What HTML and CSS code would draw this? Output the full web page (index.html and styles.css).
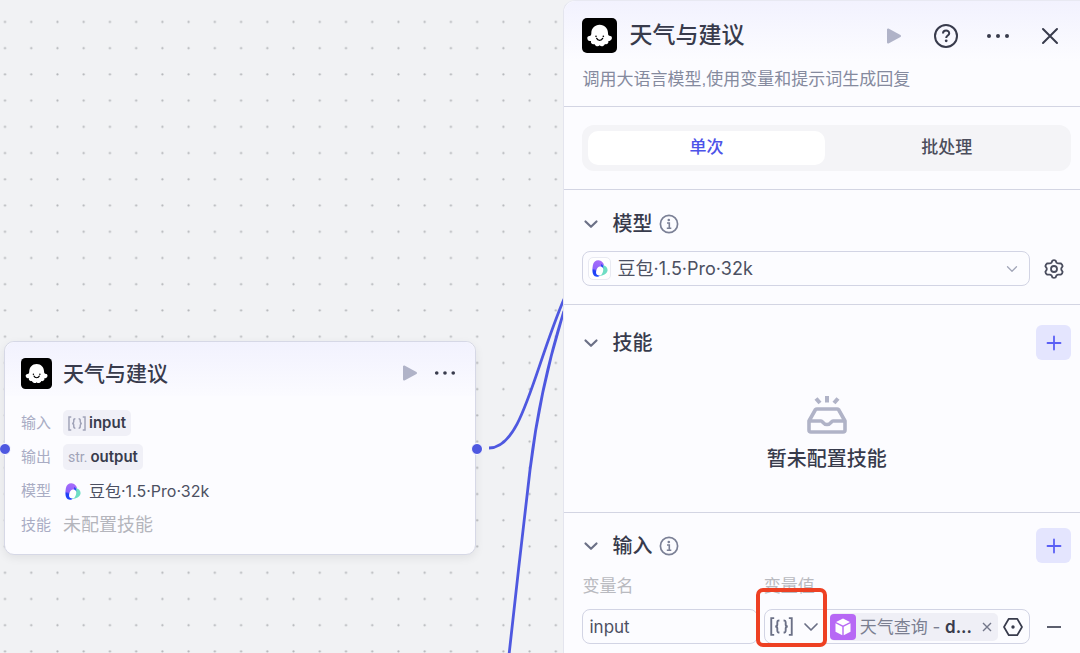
FILE: index.html
```html
<!DOCTYPE html>
<html lang="zh-CN">
<head>
<meta charset="utf-8">
<meta name="viewport" content="width=device-width, initial-scale=1">
<title>天气与建议</title>
<link rel="stylesheet" href="styles.css">
</head>
<body>
<svg class="defs" width="0" height="0" aria-hidden="true">
  <defs>
    <linearGradient id="violet" x1="0.200" y1="0" x2="0" y2="1">
      <stop offset="0" stop-color="#a56bfa"/>
      <stop offset="0.5" stop-color="#8f63fb"/>
      <stop offset="0.62" stop-color="#1f3df5"/>
      <stop offset="1" stop-color="#1f4bff"/>
    </linearGradient>
    <symbol id="ghost" viewBox="0 0 105 105">
      <rect width="105" height="105" rx="15" fill="#000"/>
      <path fill="#fff" d="M53 20C68 20 78 31 78 45C78 52 80 54 85 54C91 54 91 63 87 66C84 69 81 69 79 69C81 76 75 80 69 78C65 86 57 87 53 82C49 87 41 86 37 78C31 80 25 76 27 69C22 69 17 68 16 62C15 57 18 54 22 54C27 54 28 50 28 45C28 31 38 20 53 20Z"/>
      <path d="M44 61C47 69 59 69 62 61" fill="none" stroke="#000" stroke-width="4" stroke-linecap="round"/>
      <circle cx="42" cy="55" r="2.500"/><circle cx="64" cy="55" r="2.500"/>
    </symbol>
    <symbol id="doubao" viewBox="0 0 44 48">
      <path fill="url(#violet)" d="M2 14C4 2 16-2 25 3C33 8 35 16 33 26L22 43C18 49 7 49 3 41C0 35 0 24 2 14Z"/>
      <path fill="#2447f5" d="M25 11C31 14 34 19 34 26L25 20Z"/>
      <path fill="#6fdec4" d="M30 14C39 16 45 23 43 31C41 39 31 44 20 45C27 38 34 27 30 14Z"/>
      <ellipse cx="21" cy="31" rx="9.500" ry="13" fill="#fff" transform="rotate(18 21 31)"/>
    </symbol>
    <symbol id="play" viewBox="0 0 16 18">
      <path d="M2 2.500V15.500L14 9Z" fill="#b0b3c8" stroke="#b0b3c8" stroke-width="2" stroke-linejoin="round"/>
    </symbol>
    <symbol id="dots" viewBox="0 0 24 24">
      <g fill="#383b4c"><circle cx="3" cy="12" r="2"/><circle cx="12" cy="12" r="2"/><circle cx="21" cy="12" r="2"/></g>
    </symbol>
    <symbol id="chevron" viewBox="0 0 16 16">
      <path d="M2.500 5.500L8 10.800L13.500 5.500" fill="none" stroke="currentColor" stroke-width="2.200" stroke-linecap="round" stroke-linejoin="round"/>
    </symbol>
    <symbol id="chevron-thin" viewBox="0 0 16 16">
      <path d="M2 5L8 11L14 5" fill="none" stroke="currentColor" stroke-width="1.700" stroke-linecap="round" stroke-linejoin="round"/>
    </symbol>
    <symbol id="info" viewBox="0 0 20 20">
      <circle cx="10" cy="10" r="8.600" fill="none" stroke="#7b8096" stroke-width="1.700"/>
      <circle cx="9.800" cy="6" r="1.300" fill="#7b8096"/>
      <path d="M8 9H10.300V14M7.800 14.200H12.300" fill="none" stroke="#7b8096" stroke-width="1.600"/>
    </symbol>
    <symbol id="plus" viewBox="0 0 16 16">
      <path d="M8 1.500V14.500M1.500 8H14.500" fill="none" stroke="#5a5ff5" stroke-width="1.800" stroke-linecap="round"/>
    </symbol>
    <symbol id="array" viewBox="0 0 22 18">
      <path d="M4 1H1.200V17H4M18 1H20.800V17H18M9 3.200C7 3.200 7 4 7 5.500V7C7 8.500 6.500 9 5 9C6.500 9 7 9.500 7 11V12.500C7 14 7 14.800 9 14.800M13 3.200C15 3.200 15 4 15 5.500V7C15 8.500 15.500 9 17 9C15.500 9 15 9.500 15 11V12.500C15 14 15 14.800 13 14.800" fill="none" stroke="currentColor" stroke-width="1.800"/>
    </symbol>
  </defs>
</svg>

<div class="app">
  <main class="canvas">
    <svg class="backdrop" width="100%" height="100%" aria-hidden="true">
      <defs>
        <pattern id="grid" x="-8.100" y="8.900" width="26.230" height="26.230" patternUnits="userSpaceOnUse">
          <circle cx="13.100" cy="13.100" r="1.100" fill="#b3b5b8"/>
        </pattern>
      </defs>
      <rect width="100%" height="100%" fill="url(#grid)"/>
      <g fill="none" stroke="#4e58e0" stroke-width="2.800">
        <path d="M489 448C522 448 533 372 564 299"/>
        <path d="M509 655C515 602 524 518 530 470C537 412 548 362 564 311"/>
      </g>
    </svg>

    <article class="node">
      <header class="node-head">
        <svg class="node-logo" aria-hidden="true"><use href="#ghost"/></svg>
        <h2 class="node-title">天气与建议</h2>
        <button class="icon-btn node-btn" aria-label="运行"><svg class="i-play"><use href="#play"/></svg></button>
        <button class="icon-btn node-btn" aria-label="更多"><svg class="i-dots-sm"><use href="#dots"/></svg></button>
      </header>
      <dl class="node-rows">
        <dt>输入</dt>
        <dd><span class="tag"><svg class="i-array-sm"><use href="#array"/></svg>input</span></dd>
        <dt>输出</dt>
        <dd><span class="tag"><span class="tag-type">str.</span>output</span></dd>
        <dt>模型</dt>
        <dd class="node-model"><svg class="i-doubao"><use href="#doubao"/></svg>豆包·1.5·Pro·32k</dd>
        <dt>技能</dt>
        <dd class="muted">未配置技能</dd>
      </dl>
      <span class="port port-in"></span>
      <span class="port port-out"></span>
    </article>
  </main>

  <aside class="panel">
    <header class="panel-head">
      <div class="panel-bar">
        <svg class="panel-logo" aria-hidden="true"><use href="#ghost"/></svg>
        <h1 class="panel-title">天气与建议</h1>
        <div class="panel-actions">
          <button class="icon-btn" aria-label="运行"><svg class="i-play"><use href="#play"/></svg></button>
          <button class="icon-btn" aria-label="帮助">
            <svg class="i-24" viewBox="0 0 24 24"><circle cx="12" cy="12" r="11" fill="none" stroke="#383b4c" stroke-width="2"/><path d="M9 9.600C9 5.600 15.200 5.700 15.200 9.400C15.200 11.600 12.200 11.500 12.200 14" fill="none" stroke="#383b4c" stroke-width="2"/><circle cx="12.200" cy="16.800" r="1.400" fill="#383b4c"/></svg>
          </button>
          <button class="icon-btn" aria-label="更多"><svg class="i-24"><use href="#dots"/></svg></button>
          <button class="icon-btn" aria-label="关闭">
            <svg class="i-24" viewBox="0 0 24 24"><path d="M5 5L19 19M19 5L5 19" stroke="#383b4c" stroke-width="2" stroke-linecap="round"/></svg>
          </button>
        </div>
      </div>
      <p class="panel-desc">调用大语言模型,使用变量和提示词生成回复</p>
    </header>

    <section class="block block-tabs">
      <div class="tabs" role="tablist">
        <button class="tab tab-active" role="tab" aria-selected="true">单次</button>
        <button class="tab" role="tab" aria-selected="false">批处理</button>
      </div>
    </section>

    <section class="block">
      <div class="block-head">
        <button class="fold" aria-label="收起模型"><svg class="i-16"><use href="#chevron"/></svg></button>
        <h2 class="block-title">模型</h2>
        <svg class="i-20" aria-hidden="true"><use href="#info"/></svg>
      </div>
      <div class="field-row">
        <div class="box model-box">
          <span class="model-logo"><svg class="i-doubao"><use href="#doubao"/></svg></span>
          <select class="model-select" aria-label="模型"><option>豆包·1.5·Pro·32k</option></select>
          <svg class="i-caret" aria-hidden="true"><use href="#chevron-thin"/></svg>
        </div>
        <button class="icon-btn side-btn" aria-label="模型设置">
          <svg class="i-20" viewBox="0 0 20 20" fill="none" stroke="#4a4d5e" stroke-width="1.800" stroke-linejoin="round"><path d="M8.500 1.500Q10 .8 11.500 1.500L12.500 3.600Q13.500 4.600 14.800 4.300L17 4.500Q18.400 5.500 18.600 7.200L17.300 9.200V10.800L18.600 12.800Q18.400 14.500 17 15.500L14.800 15.700Q13.500 15.400 12.500 16.400L11.500 18.500Q10 19.200 8.500 18.500L7.500 16.400Q6.500 15.400 5.200 15.700L3 15.500Q1.600 14.500 1.400 12.800L2.700 10.800V9.200L1.400 7.200Q1.600 5.500 3 4.500L5.200 4.300Q6.500 4.600 7.500 3.600Z"/><circle cx="10" cy="10" r="3"/></svg>
        </button>
      </div>
    </section>

    <section class="block block-skills">
      <div class="block-head">
        <button class="fold" aria-label="收起技能"><svg class="i-16"><use href="#chevron"/></svg></button>
        <h2 class="block-title">技能</h2>
        <button class="add" aria-label="添加技能"><svg class="i-16"><use href="#plus"/></svg></button>
      </div>
      <div class="empty">
        <svg class="i-empty" viewBox="0 0 40 38" fill="none" stroke="#b0b3c7" aria-hidden="true">
          <path d="M20 0V6.500M9 2.500L13 7M31 2.500L27 7" stroke-width="4"/>
          <path d="M2 25L8.500 13.500Q9 13 10 13H30Q31 13 31.500 13.500L38 25V34Q38 36 36 36H4Q2 36 2 34ZM2 25H14C16 25 16 28.500 20 28.500C24 28.500 24 25 26 25H38" stroke-width="3.600" stroke-linejoin="round"/>
        </svg>
        <p class="empty-text">暂未配置技能</p>
      </div>
    </section>

    <section class="block block-input">
      <div class="block-head">
        <button class="fold" aria-label="收起输入"><svg class="i-16"><use href="#chevron"/></svg></button>
        <h2 class="block-title">输入</h2>
        <svg class="i-20" aria-hidden="true"><use href="#info"/></svg>
        <button class="add" aria-label="添加输入"><svg class="i-16"><use href="#plus"/></svg></button>
      </div>
      <div class="vars">
        <label class="var-label" for="var-name">变量名</label>
        <span class="var-label">变量值</span>
        <input class="box var-name" id="var-name" type="text" value="input">
        <div class="box var-value">
          <button class="type-btn" aria-label="变量类型">
            <svg class="i-array"><use href="#array"/></svg>
            <svg class="i-16"><use href="#chevron-thin"/></svg>
          </button>
          <span class="ref">
            <svg class="i-cube" viewBox="0 0 26 26" aria-hidden="true"><rect width="26" height="26" rx="4" fill="#b768f5"/><path d="M13 4.500L20 8L13 11.500L6 8ZM5.500 9.300L12.300 12.700V21.200L5.500 17.700ZM20.500 9.300L13.700 12.700V21.200L20.500 17.700Z" fill="#fff"/></svg>
            <span class="ref-text">天气查询 - <b>d...</b></span>
            <button class="ref-clear" aria-label="清除"><svg class="i-x" viewBox="0 0 10 10"><path d="M1 1L9 9M9 1L1 9" stroke="#73778a" stroke-width="1.400"/></svg></button>
          </span>
          <button class="icon-btn hex" aria-label="选择变量"><svg class="i-20" viewBox="0 0 20 20"><path d="M5.800 1.800H14.200L19 10L14.200 18.200H5.800L1 10Z" fill="none" stroke="#383b4c" stroke-width="1.700" stroke-linejoin="round"/><circle cx="10" cy="10" r="1.700" fill="#383b4c"/></svg></button>
          <span class="callout"></span>
        </div>
        <button class="icon-btn side-btn" aria-label="删除"><svg class="i-16" viewBox="0 0 16 16"><path d="M1 8H15" stroke="#4a4d5e" stroke-width="1.800"/></svg></button>
      </div>
    </section>
  </aside>
</div>
</body>
</html>
```
FILE: styles.css
```css
* { box-sizing: border-box; }

body {
  margin: 0;
  background: #f1f2f4;
  color: #383b4c;
  font-family: "Liberation Sans", "Noto Sans CJK SC", sans-serif;
  font-size: 17px;
  line-height: 24px;
}

h1, h2, p, dl, dd { margin: 0; }
svg { display: block; flex: none; }
button, input, select { font: inherit; color: inherit; }
button { margin: 0; padding: 0; border: 0; background: none; cursor: pointer; }

.defs { position: absolute; }

.app {
  display: grid;
  grid-template-columns: minmax(0, 12fr) minmax(0, 11fr);
  height: 100vh;
  overflow: hidden;
}

/* canvas */
.canvas { position: relative; }
.backdrop { position: absolute; inset: 0; }

.node {
  position: absolute;
  left: 4px;
  top: 341px;
  width: 472px;
  border: 1px solid #d6d8e6;
  border-radius: 10px;
  background: #fcfcff;
  box-shadow: 0 3px 10px rgba(0, 0, 0, 0.07);
}
.node-head {
  display: flex;
  align-items: center;
  gap: 11px;
  height: 54px;
  padding: 8px 14px 0 16px;
  border-radius: 10px 10px 0 0;
  background: linear-gradient(#f2f2fe, #fbfbff);
}
.node-logo { width: 31px; height: 31px; }
.node-title { margin-right: auto; font-size: 21px; line-height: 31px; font-weight: 500; }
.node-btn { width: 34px; }
.node-head .node-btn + .node-btn { margin-left: -8px; }
.node-rows {
  display: grid;
  grid-template-columns: 31px 1fr;
  grid-auto-rows: 26px;
  align-items: center;
  gap: 8px 11px;
  padding: 14px 16px 16px;
}
.node-rows dt { font-size: 15px; color: #a9acc4; white-space: nowrap; }
.node-rows .muted { font-size: 18px; color: #b4b5bc; }
.node-model {
  display: flex;
  align-items: center;
  gap: 8px;
  padding-left: 2px;
  color: #4c5062;
  font-family: Inter, "Noto Sans CJK SC", sans-serif;
  font-size: 16px;
}
.tag {
  display: inline-flex;
  align-items: center;
  gap: 3px;
  height: 26px;
  padding: 0 5px;
  border-radius: 5px;
  background: #f0f0f7;
  font-family: Inter, "Noto Sans CJK SC", sans-serif;
  font-size: 15px;
  font-weight: 600;
  vertical-align: top;
}
.tag-type { font-family: Roboto, sans-serif; font-weight: 400; font-size: 14px; color: #a0a3b8; }
.tag svg { color: #a0a3b8; }

.port {
  position: absolute;
  top: 101px;
  width: 12px;
  height: 12px;
  border: 1px solid #fff;
  border-radius: 50%;
  background: #4e58e0;
}
.port-in { left: -6px; }
.port-out { right: -8px; }

/* panel */
.panel {
  position: relative;
  border-left: 1px solid #e4e5ee;
  border-top: 1px solid #e8e9f2;
  border-radius: 12px 0 0 0;
  background: #fcfcff;
}
.panel-head {
  padding: 17px 14px 14px 18px;
  border-radius: 12px 0 0 0;
  background: linear-gradient(#f2f2fe, #fcfcff 60px);
}
.panel-bar { display: flex; align-items: center; gap: 12px; }
.panel-logo { width: 35px; height: 35px; }
.panel-title { margin-right: auto; font-size: 23px; line-height: 35px; font-weight: 500; }
.panel-actions { display: flex; gap: 20px; }
.panel-desc { margin-top: 15px; color: #858a9e; }

.icon-btn { display: flex; align-items: center; justify-content: center; width: 32px; height: 32px; }

.block { padding: 16px 9px 18px 18px; border-top: 1px solid #d3d5e3; }
.block-tabs { padding-top: 18px; }
.tabs {
  display: grid;
  grid-template-columns: 1fr 1fr;
  gap: 4px;
  padding: 6px;
  border-radius: 12px;
  background: #f4f4f7;
}
.tab { height: 34px; border-radius: 10px; font-weight: 500; color: #4c4e5c; }
.tab-active { background: #fff; color: #4d53e8; }

.block-head { display: flex; align-items: center; height: 35px; margin-bottom: 10px; }
.fold { width: 18px; height: 18px; padding-left: 1px; margin-right: 12px; color: #6b7086; }
.block-title { margin-right: 7px; font-size: 20px; line-height: 28px; font-weight: 500; }
.add {
  display: flex;
  align-items: center;
  justify-content: center;
  width: 35px;
  height: 35px;
  margin-left: auto;
  border-radius: 6px;
  background: #e4e5fe;
}

.field-row { display: grid; grid-template-columns: minmax(0, 1fr) 35px; gap: 6px; }
.side-btn { width: 35px; height: 35px; }
.box { height: 35px; border: 1px solid #d2d4e4; border-radius: 8px; background: #fcfcff; }
.model-box { position: relative; display: flex; align-items: center; }
.model-logo {
  display: flex;
  align-items: center;
  justify-content: center;
  width: 23px;
  height: 23px;
  margin-left: 5px;
  border: 1px solid #e9eaf2;
  border-radius: 5px;
  background: #fff;
}
.model-select {
  flex: 1;
  height: 33px;
  padding: 0 32px 0 6px;
  border: 0;
  background: none;
  appearance: none;
  color: #4c5062;
  font-family: Inter, "Noto Sans CJK SC", sans-serif;
  font-size: 18px;
}
.i-caret { position: absolute; right: 11px; width: 12px; height: 12px; color: #a2a6b8; pointer-events: none; }

.block-skills { padding-top: 20px; padding-bottom: 39px; }
.empty { display: flex; flex-direction: column; align-items: center; gap: 11px; padding-top: 26px; }
.empty-text { font-size: 20px; line-height: 28px; font-weight: 500; }

.block-input { padding-top: 15px; }
.block-input .block-head { margin-bottom: 12px; }
.vars {
  display: grid;
  grid-template-columns: minmax(0, 175fr) minmax(0, 266fr) 35px;
  gap: 10px 6px;
}
.var-label { color: #b9bac0; }
.var-label:nth-child(2) { grid-column: 2 / 4; }
.var-name { width: 100%; padding: 0 6px; color: #4c5062; font-family: Inter, "Noto Sans CJK SC", sans-serif; }
.var-value { position: relative; display: flex; align-items: center; padding: 0 6px 0 5px; }
.type-btn { display: flex; align-items: center; gap: 10px; margin-right: 11px; color: #6b7086; }
.ref {
  display: flex;
  align-items: center;
  flex: 1;
  min-width: 0;
  height: 28px;
  margin-right: 5px;
  border-radius: 5px;
  background: #efeff6;
}
.ref-text {
  margin: 0 auto 0 4px;
  color: #7b7f91;
  font-family: Inter, "Noto Sans CJK SC", sans-serif;
  white-space: nowrap;
}
.ref-text b { color: #383b4c; font-weight: 600; }
.ref-clear { padding: 6px; }
.hex { width: 20px; }
.callout {
  position: absolute;
  left: -9px;
  top: -22px;
  width: 71px;
  height: 59px;
  border: 4px solid #ee4023;
  border-radius: 7px;
  pointer-events: none;
}

/* icon sizes */
.i-16 { width: 16px; height: 16px; }
.i-20 { width: 20px; height: 20px; }
.i-24 { width: 24px; height: 24px; }
.i-play { width: 16px; height: 18px; }
.i-dots-sm { width: 22px; height: 22px; }
.i-doubao { width: 16px; height: 17px; }
.i-array { width: 23px; height: 19px; }
.i-array-sm { width: 18px; height: 15px; }
.i-cube { width: 26px; height: 26px; }
.i-empty { width: 40px; height: 38px; }
.i-x { width: 10px; height: 10px; }
```
